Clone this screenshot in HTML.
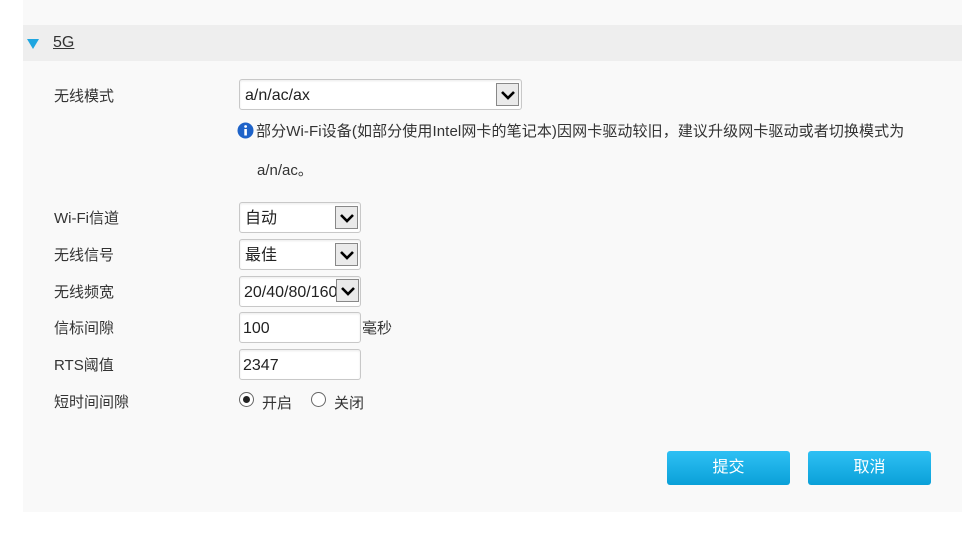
<!DOCTYPE html>
<html><head><meta charset="utf-8"><style>
*{margin:0;padding:0;box-sizing:border-box}
body{width:971px;height:535px;background:#fff;font-family:"Liberation Sans","Noto Sans CJK SC",sans-serif;font-size:15px;color:#333;position:relative;overflow:hidden}
.panel{position:absolute;left:23px;top:0;width:939px;height:512px;background:#f9f9f9}
.hdr{position:absolute;left:23px;top:25px;width:939px;height:36px;background:#eeeeee}
.tri{position:absolute;left:27px;top:39px;width:0;height:0;border-left:6px solid transparent;border-right:6px solid transparent;border-top:10px solid #1fa6e0}
.t5g{position:absolute;left:53px;top:34px;font-size:16px;text-decoration:underline;color:#333}
.lbl{position:absolute;left:54px;font-size:15px}
.box{position:absolute;left:239px;height:31px;background:#fff;border:1px solid #c8c8c8;border-radius:3px;font-size:16px;padding-left:5px;padding-top:1px;line-height:29px;color:#222;box-shadow:inset 0 1px 2px rgba(0,0,0,.08)}
.arr{position:absolute;right:2px;top:3px;width:23px;height:23px;border:1px solid #888;background:#eaeaea}
.arr svg{position:absolute;left:4px;top:6px}
.txt{position:absolute;font-size:15px}
.rad{position:absolute;width:15px;height:15px;border:1px solid #666;border-radius:50%;background:#fff}
.rad.on::after{content:"";position:absolute;left:3px;top:3px;width:7px;height:7px;border-radius:50%;background:#222}
.btn{position:absolute;top:451px;width:123px;height:34px;border-radius:3px;background:linear-gradient(#2ec0f4,#0aa0d8);color:#fff;font-size:16px;text-align:center;line-height:34px}
</style></head><body>
<div class="panel"></div>
<div class="hdr"></div>
<div class="tri"></div>
<div class="t5g">5G</div>

<div class="lbl" style="top:85px">无线模式</div>
<div class="box" style="top:79px;width:283px">a/n/ac/ax<div class="arr"><svg width="14" height="10"><path d="M1 2 L7 8 L13 2" stroke="#000" stroke-width="2.6" fill="none"/></svg></div></div>
<svg style="position:absolute;left:237px;top:122px" width="17" height="17"><circle cx="8.5" cy="8.5" r="8" fill="#1e63c9"/><rect x="7.3" y="7" width="2.6" height="6.5" fill="#fff"/><circle cx="8.6" cy="4.5" r="1.4" fill="#fff"/></svg>
<div class="txt" style="left:256px;top:120px;letter-spacing:0.1px">部分Wi-Fi设备(如部分使用Intel网卡的笔记本)因网卡驱动较旧，建议升级网卡驱动或者切换模式为</div>
<div class="txt" style="left:257px;top:159px">a/n/ac。</div>

<div class="lbl" style="top:207px">Wi-Fi信道</div>
<div class="box" style="top:202px;width:122px">自动<div class="arr"><svg width="14" height="10"><path d="M1 2 L7 8 L13 2" stroke="#000" stroke-width="2.6" fill="none"/></svg></div></div>
<div class="lbl" style="top:244px">无线信号</div>
<div class="box" style="top:239px;width:122px">最佳<div class="arr"><svg width="14" height="10"><path d="M1 2 L7 8 L13 2" stroke="#000" stroke-width="2.6" fill="none"/></svg></div></div>
<div class="lbl" style="top:281px">无线频宽</div>
<div class="box" style="top:276px;width:122px;padding-left:4px;overflow:hidden;white-space:nowrap">20/40/80/160<div class="arr" style="top:2px;right:1px"><svg width="14" height="10"><path d="M1 2 L7 8 L13 2" stroke="#000" stroke-width="2.6" fill="none"/></svg></div></div>
<div class="lbl" style="top:317px">信标间隙</div>
<div class="box" style="top:312px;width:122px;padding-left:3px">100</div>
<div class="txt" style="left:362px;top:317px">毫秒</div>
<div class="lbl" style="top:354px">RTS阈值</div>
<div class="box" style="top:349px;width:122px;padding-left:3px">2347</div>
<div class="lbl" style="top:391px">短时间间隙</div>
<div class="rad on" style="left:239px;top:392px"></div>
<div class="txt" style="left:262px;top:392px">开启</div>
<div class="rad" style="left:311px;top:392px"></div>
<div class="txt" style="left:334px;top:392px">关闭</div>

<div class="btn" style="left:667px">提交</div>
<div class="btn" style="left:808px">取消</div>
</body></html>
